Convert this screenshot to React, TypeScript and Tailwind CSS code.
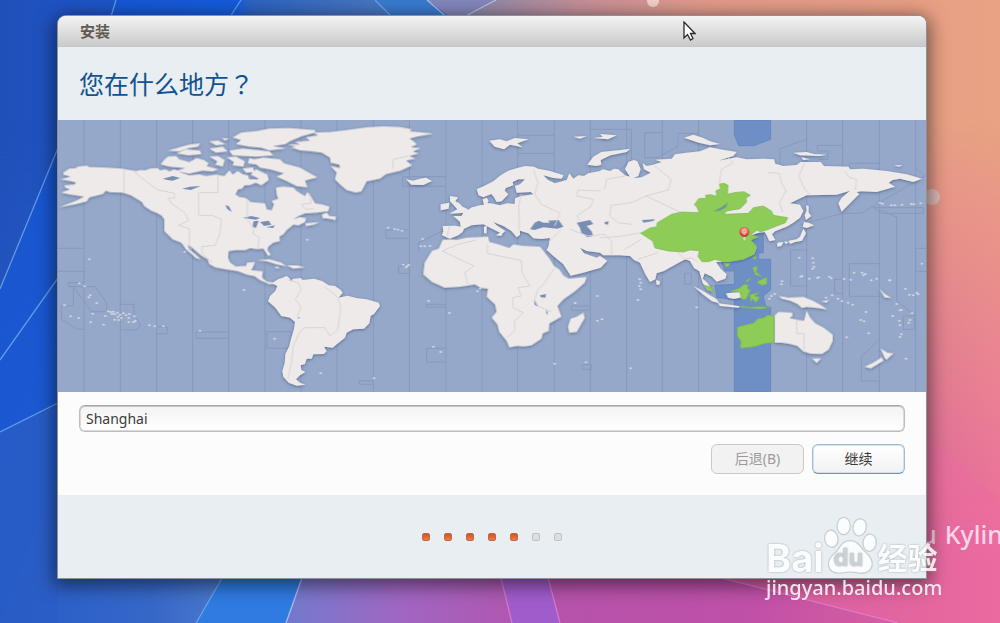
import { useState } from 'react';
import clsx from 'clsx';

const STEPS = 7;
const CURRENT_STEP = 5;

const zoneLines = [78, 187, 296, 404, 512, 621, 729, 837, 946, 1054, 1164, 1272, 1379, 1489, 1597, 1706, 1813, 1922, 2246, 2354, 2464, 2573];

// x, y pairs for the islands too small to outline
const islands = [
  [64, 502], [80, 511], [92, 544], [97, 538], [116, 561], [20, 568], [38, 601], [62, 606], [104, 593], [98, 619], [137, 626],
  [142, 600], [150, 586], [158, 588], [166, 587], [162, 594], [170, 595], [178, 590], [186, 596], [180, 602], [190, 606], [196, 592],
  [204, 598], [212, 606], [214, 594], [170, 611], [182, 612], [212, 618], [230, 601], [232, 615], [226, 618], [274, 628], [290, 631],
  [316, 631], [426, 644], [94, 430], [558, 522], [380, 407], [748, 371], [990, 335], [1010, 340], [1020, 341], [1032, 344],
  [1094, 369], [1088, 391], [1100, 391], [1116, 390], [1036, 446], [1048, 450], [1044, 454], [1052, 447], [1112, 555], [1174, 591],
  [1126, 692], [1148, 708], [1258, 526], [1266, 518], [1552, 561], [1618, 540], [1618, 614], [1632, 610], [1490, 743], [1584, 739],
  [1745, 490], [1748, 500], [1744, 510], [1748, 520], [1740, 552], [1916, 574], [1718, 757], [788, 772], [650, 668], [948, 787],
  [2224, 425], [2264, 427], [2266, 440], [2268, 452], [2264, 458], [2172, 496], [2170, 505], [2228, 482], [2232, 480], [2254, 488],
  [2278, 486], [2282, 484], [2314, 482], [2320, 487], [2358, 489], [2378, 491], [2388, 470], [2412, 470], [2422, 474], [2416, 478],
  [2440, 493], [2456, 488], [2494, 493], [2496, 493], [2542, 518], [2554, 536], [2566, 538], [2580, 535], [2576, 530], [2592, 443],
  [2516, 564], [2526, 583], [2504, 600], [2530, 582], [2556, 612], [2562, 592], [2524, 614], [2526, 628], [2552, 620], [2530, 655],
  [2526, 663], [2424, 588], [2408, 612], [2418, 616], [2366, 664], [2432, 652], [2544, 728], [2140, 540], [2134, 548], [2150, 534],
  [2340, 548], [2352, 556], [2370, 560], [2384, 566], [2322, 538], [2304, 545], [2500, 268], [2510, 268], [2532, 266], [2560, 264],
  [2568, 265], [2588, 262], [2466, 261], [2474, 263],
];

const WorldMap = () => (
  <svg viewBox="0 12 2604 816" className="block w-full bg-[#95a8c9]" role="img" aria-label="时区地图">
    <defs>
      <filter id="coast" x="-2%" y="-2%" width="104%" height="104%">
        <feDropShadow dx="0" dy="3" stdDeviation="5" floodColor="#33456b" floodOpacity="0.6" />
      </filter>
      <radialGradient id="pin" cx="0.5" cy="0.4" r="0.6">
        <stop offset="0.45" stopColor="#ff9a94" />
        <stop offset="0.7" stopColor="#e33a34" />
        <stop offset="1" stopColor="#c01818" />
      </radialGradient>
    </defs>

    {/* time zone boundaries */}
    <g fill="none" stroke="#879abd" strokeWidth="3">
      {zoneLines.map((x) => (
        <path key={x} d={`M${x},12 V828`} />
      ))}
      <path d="M0,397H78M0,466H78V500H32V512H112L146,562V587H100L46,512V570H10V610L60,640H78M187,565H228V592L248,630 234,642H187M296,633H328V653H296M512,648H414V667H512M627,647H700V697H627Z" />
      <path d="M1164,182H1034V211H1164M1054,342H984V367H1054M1022,450H1054V472H1022ZM1164,565H1104V573H1164M1164,697H1106V738H1164M904,794H946V805H904ZM1164,340L1082,380V410" />
      <path d="M1379,58H1489M1379,112H1489M1597,40H1720V130L1690,160M1760,125V50H1813M1760,125H1800L1860,90V52H1922M1540,570H1597V583H1540ZM1573,746H1600V760H1573Z" />
      <path d="M2246,70L2166,98V150M2354,88H2278V105H2310V130H2280M2464,142H2374V160M2573,155L2600,180 2410,292H2354L2230,325M2464,282L2516,303V555L2573,600M2464,443H2374V541H2464V670L2410,722V795H2464V828M2246,402H2198V510H2246M2354,490H2330V532H2354M2604,397H2573V466H2604M2536,600H2570V640H2536ZM2446,275H2596V292H2470Z" />
      <path d="M1880,472H1900V505H1880ZM1960,510H2010V540H1980V515" />
    </g>

    {/* selected zone */}
    <g transform="translate(1626 0)" fill="#6d8fc6" stroke="#6180b5" strokeWidth="2">
      <path d="M403,12H512V70L462,89 416,89 403,56Z" />
      <path d="M403,828V550L350,545 345,508 403,505V465L375,465 365,440 430,425 440,360 455,345 490,350V410L476,412V430H512V522L490,540 497,570 512,574V828Z" />
    </g>

    <g fill="#eeeaea" filter="url(#coast)">
      {/* North America and the Arctic */}
      <g transform="translate(-6 0)">
        <path d="M22,170L40,158 58,157 66,152 92,149 100,153 150,155 196,158 240,165 252,162 268,163 282,158 305,156 312,163 328,160 340,166 355,160 375,170 400,178 430,175 450,180 480,176 505,180 520,163 530,176 545,165 560,175 575,178 580,190 604,190 600,200 582,207 565,208 558,218 546,220 538,235 550,243 565,245 575,250 584,258 602,260 627,262 632,280 647,283 654,265 647,255 667,248 662,235 660,215 682,212 712,215 722,225 747,240 754,228 767,245 777,262 797,265 820,272 817,285 782,290 747,292 727,300 712,310 732,303 750,306 747,318 727,328 712,326 692,342 682,355 670,362 672,375 652,380 637,392 634,402 644,415 637,420 627,405 622,398 602,399 582,396 568,402 540,402 518,405 516,425 522,440 540,452 555,450 570,450 573,440 597,438 590,455 585,462 620,466 618,485 632,497 650,500 668,495 672,502 640,504 612,492 595,480 572,476 545,465 510,460 478,454 460,444 455,430 435,418 420,405 405,392 395,388 400,400 415,413 434,429 420,426 405,412 390,400 382,388 375,380 350,370 335,355 325,345 325,310 316,298 300,290 285,284 265,270 258,258 245,250 225,238 200,230 160,228 150,224 140,234 115,240 100,244 92,256 60,264 10,273 40,262 62,254 84,242 60,238 40,235 16,230 42,220 28,215 25,208 55,206 60,200 48,196 14,190 44,182 22,176Z" />
        <path d="M530,64L556,50 602,45 640,38 700,36 778,42 776,50 738,60 702,75 688,84 650,90 690,97 640,103 615,95 580,92 540,84 555,72ZM697,85L732,86 718,78 762,74 750,64 787,58 772,50 822,48 872,42 932,34 982,31 1032,33 1068,40 1060,46 1102,50 1132,53 1082,62 1060,68 1072,75 1082,85 1064,94 1094,96 1070,107 1088,112 1060,120 1078,128 1050,134 1068,148 1034,164 990,174 972,188 932,196 916,226 900,230 872,222 852,205 837,190 842,170 824,150 852,156 850,146 824,140 822,125 797,110 762,105 732,103 705,94 720,92Z" />
        <path d="M582,132L622,125 672,130 684,142 732,155 758,170 784,184 760,190 747,194 754,214 722,210 692,195 662,182 684,172 642,160 612,155 600,144Z" />
        <path d="M314,145L326,130 336,122 360,120 370,130 400,138 422,126 444,132 458,142 452,150 486,160 470,166 440,164 400,173 360,165 388,156 340,152Z" />
        <path d="M336,104L370,94 400,86 432,82 426,92 398,96 370,106ZM362,112L390,100 432,104 436,114 398,118ZM460,98L500,92 514,106 480,110ZM460,122L486,120 506,132 500,152 478,146 484,136ZM520,104L560,98 640,106 652,118 600,122 530,118ZM512,124L540,122 566,136 562,152 530,148 534,138ZM580,126L610,134 604,146 576,142ZM460,76L486,74 508,84 480,88ZM498,66L520,68 506,73ZM584,176L600,160 634,176 638,192 616,208 596,198 608,188ZM560,158L590,154 596,168 570,170Z" />
        <path d="M798,296L812,290 820,300 840,302 838,312 818,308 800,306ZM748,322L790,318 774,326 750,330ZM604,432L640,430 676,440 690,450 664,446 634,436ZM692,448L722,448 748,454 712,458ZM656,452L672,454 662,458Z" />
      </g>

      {/* South America */}
      <path transform="translate(576 0)" d="M66,502L84,490 96,486 110,480 122,490 152,486 158,492 192,488 216,495 236,508 255,510 272,522 278,530 266,545 292,539 322,547 350,550 386,560 390,570 372,594 362,600 358,622 342,638 310,640 290,650 285,665 264,682 248,695 222,692 230,706 222,714 190,715 185,728 170,728 165,744 152,748 154,762 166,768 150,778 138,790 150,800 166,806 140,809 116,800 100,782 97,765 104,742 106,715 118,690 124,665 132,640 135,618 120,605 94,600 76,575 54,556 60,540 76,525 82,510Z" />

      {/* Eurasia */}
      <g transform="translate(1026 0)">
        <path d="M126,358L130,346 128,330 165,329 182,332 180,318 160,300 185,300 190,290 216,274 240,268 252,266 248,250 260,245 266,254 262,262 272,262 300,268 322,262 344,264 345,247 365,240 400,235 392,228 350,230 345,210 360,205 375,190 355,190 338,198 340,208 318,216 314,224 325,235 305,256 290,258 282,244 274,234 250,244 236,238 230,220 252,210 280,196 302,178 325,164 352,156 375,150 402,152 414,158 450,165 491,178 485,188 460,186 430,178 444,192 465,202 500,192 508,172 520,188 535,178 552,180 565,172 600,165 608,160 630,165 642,158 655,160 675,178 690,182 675,160 685,138 702,132 712,136 722,160 715,180 700,187 725,184 752,170 732,160 728,142 740,150 760,146 785,138 765,131 815,128 825,115 860,110 900,106 930,94 960,100 1010,108 1000,120 955,134 1010,124 1040,130 1090,128 1122,130 1126,143 1150,150 1190,147 1202,138 1262,138 1272,150 1346,152 1350,160 1390,158 1460,165 1520,175 1566,188 1540,198 1500,188 1478,192 1466,200 1485,212 1430,228 1385,226 1370,228 1378,234 1354,258 1325,287 1315,262 1325,245 1350,224 1310,236 1220,238 1170,262 1200,266 1210,285 1200,305 1180,320 1160,332 1125,346 1116,355 1126,372 1108,376 1100,358 1094,348 1070,352 1050,360 1075,362 1052,372 1070,395 1062,415 1030,430 980,438 948,438 962,458 980,475 976,488 950,497 936,482 914,472 908,488 922,500 940,527 922,522 908,500 898,466 882,456 870,435 856,430 836,440 792,465 770,472 766,490 750,498 736,475 720,440 702,432 690,420 658,418 610,418 600,410 560,405 540,395 552,412 590,425 600,420 622,434 602,455 550,470 512,479 490,445 460,420 440,402 446,390 450,366 424,369 400,367 385,352 360,344 360,356 350,364 335,346 310,330 280,318 290,328 316,345 308,352 304,360 288,358 300,350 270,335 250,325 215,328 192,338 188,348 175,358 150,368 136,362Z" />
        <path d="M150,240L174,244 166,256 178,262 188,272 204,280 196,290 148,293 172,280 160,266 150,256ZM122,265L148,260 146,278 122,283ZM18,190L40,194 60,188 78,185 96,195 70,207 34,206ZM268,74L300,70 320,76 345,66 386,70 352,82 368,94 330,86 312,100 284,92ZM562,146L580,122 604,108 662,102 690,98 680,108 632,118 602,132 604,146 590,150ZM252,332L260,330 260,352 252,352ZM520,62L560,60 540,68ZM580,66L608,62 600,54 650,58 624,70Z" />
        <path d="M852,65L880,56 910,66 930,76 960,84 930,88 896,80ZM1180,110L1220,108 1242,114 1280,116 1260,120 1200,118ZM1204,124L1230,130 1210,132ZM1482,148L1508,148 1496,152Z" />
        {/* Japan and Sakhalin */}
        <path d="M1218,268L1226,270 1226,290 1234,300 1218,312 1214,298 1220,284ZM1212,318L1226,320 1242,328 1220,336 1208,332ZM1210,338L1218,352 1206,374 1186,378 1170,384 1166,374 1190,370 1200,362ZM1132,380L1150,378 1144,390 1132,392ZM1152,376L1166,378 1158,384Z" />
        <path d="M768,492L780,496 778,506 770,506Z" />
      </g>

      {/* Africa */}
      <path transform="translate(1026 0)" d="M128,372L150,370 170,372 200,365 264,362 268,378 296,385 328,396 340,385 372,390 420,392 428,402 450,430 462,450 478,460 490,478 506,488 560,483 554,500 526,525 490,550 472,570 484,602 448,622 446,645 428,652 424,668 394,688 372,691 350,690 328,694 320,675 298,648 292,625 275,605 290,587 285,565 260,542 264,518 242,516 225,505 205,508 182,512 134,515 96,498 70,475 74,440 96,405 116,398 122,385ZM512,608L530,602 550,590 554,606 530,648 508,650 504,632Z" />

      {/* South-east Asia and Oceania */}
      <g transform="translate(1626 0)">
        <path d="M280,510L308,524 350,550 358,562 336,556 310,536ZM354,562L400,568 420,571 415,575 360,570ZM378,532L420,528 426,544 402,549 384,545Z" />
      </g>
      <g transform="translate(2046 0)">
        <path d="M104,598L116,588 156,590 158,600 148,606 172,612 192,614 200,584 210,604 226,622 252,636 278,656 278,675 266,700 246,714 212,713 190,706 172,690 150,684 126,680 104,680ZM216,727L243,727 230,741ZM422,697L442,710 460,712 440,731 434,726ZM374,752L400,740 425,724 430,734 392,757ZM116,540L145,545 190,543 220,555 240,566 262,580 232,576 200,573 186,576 172,564 150,554 126,548ZM244,556L268,552 272,546 260,560ZM418,518L432,532 454,546 434,544Z" />
      </g>
    </g>
    <g fill="#dfe0e6" opacity="0.85">
      {islands.map(([x, y], i) => (
        <ellipse key={i} cx={x} cy={y} rx="4" ry="3" />
      ))}
    </g>

    {/* lakes and inland seas */}
    <g fill="#788eb5">
      <path d="M1416,340L1430,320 1442,314 1456,320 1476,320 1470,314 1502,312 1516,332 1498,338 1456,334 1430,342ZM1556,320L1596,312 1606,324 1586,330 1600,345 1606,360 1588,364 1570,350 1566,336ZM1640,318L1652,316 1650,326 1640,324ZM1446,538L1464,534 1462,545 1448,544ZM1428,552L1440,572 1430,566ZM1466,578L1470,598 1464,590Z" />
      <path d="M314,188L344,180 366,186 344,194 328,192ZM372,218L396,212 428,210 398,222ZM502,268L512,270 522,288 508,280ZM554,306L580,300 606,306 594,311ZM586,316L602,314 594,336 584,332ZM606,318L632,314 640,326 618,330ZM624,334L650,328 646,336ZM720,602L726,606 720,608ZM696,486L704,492 698,496Z" />
      <path d="M1752,312L1790,310 1786,315 1756,320Z" />
    </g>

    {/* zone borders over land */}
    <g fill="none" stroke="#d8d3d4" strokeWidth="3">
      <path d="M198,160V230M230,168L262,195 300,222 350,232V246H330L340,262 380,290 392,314 362,328 394,338V385L400,400M480,178V230H422V298H462L490,310 486,350 472,388 432,392V412L464,440M568,250V310L588,340 584,352 604,365 600,396M754,232L760,262 730,265 742,280 766,278" />
      <path d="M690,492L720,500 730,520 712,550 730,575 718,600M724,650L740,635 800,635 815,660 840,640 848,575 840,545 800,512M724,650L706,690 700,740 690,790M1004,158L1006,130 1050,120" />
      <path d="M1152,405L1200,385 1254,372M1152,405L1248,450 1220,470 1230,505M1288,385V412L1390,434 1392,470 1416,510 1380,515 1390,540 1364,545V575L1396,590 1370,615V645L1346,665M1490,455L1460,500 1440,520 1430,550 1440,570 1480,588M1174,330L1166,366M1390,235L1382,270 1384,345M1426,160L1440,200 1430,235 1450,265 1506,292 1490,330M1510,340L1470,380M1536,340L1590,360 1640,355 1660,375 1660,418" />
      <path d="M1626,225L1560,222 1556,240 1606,250 1600,270 1556,300 1566,314M1640,220L1646,190 1700,180M1790,150L1840,190 1830,222 1764,240 1870,290M1764,240L1720,260 1660,268 1655,300 1680,320 1720,325M1626,365L1680,362 1750,350M1700,400L1750,370M1984,200L1990,160 2026,140 2010,125M1740,430L1800,410" />
      <path d="M2130,170L2164,172 2170,200 2184,225 2164,260 2174,290M2240,140L2222,180 2240,220 2256,235M2360,165L2374,185 2396,190 2392,222M2216,610V652H2238V706M1858,408L1880,430 1900,425 1920,438M2144,330L2120,345" />
    </g>

    {/* areas that share the selected zone */}
    <g transform="translate(1626 0)" fill="#8ccc57" stroke="#7cb64e" strokeWidth="2">
      <path d="M298,290L290,272 283,266 296,248 320,246 316,238 332,236 350,241 348,224 362,218 358,204 372,202 384,208 382,235 402,230 432,227 451,238 438,246 440,258 420,278 380,285 372,295 445,292 460,275 490,270 514,285 520,298 563,305 556,320 530,330 505,340 480,348 472,342 452,356 474,362 452,372 470,390 462,415 430,430 396,436 372,438 345,430 326,437 306,437 294,422 298,404 270,402 250,408 205,405 165,396 158,375 122,352 150,336 170,332 172,320 215,295 245,288Z" />
      <path d="M412,634L440,626 460,622 474,608 490,606 504,597 522,600V680L496,682 462,692 425,697 420,690 424,678 412,660ZM312,507L334,514 342,528 324,522ZM392,526L420,516 430,506 444,506 442,518 451,522 438,550 424,549 420,528ZM450,536L478,530 462,540 478,544 468,560 458,548 452,558ZM372,442L390,442 384,453 376,450ZM458,426L468,420 466,432ZM458,454L472,452 468,468 486,482 466,476ZM474,496L500,484 500,504 486,508 472,500ZM438,494L452,486 442,498ZM420,570L450,574 478,572 508,574 480,579 424,574Z" />
      <path d="M342,285L364,274 383,260 378,274 360,284Z" fill="#6d8fae" />
    </g>

    {/* location pin */}
    <path d="M2059,360V371" stroke="#eee" strokeWidth="4" strokeLinecap="round" />
    <ellipse cx="2059" cy="348" rx="14" ry="15" fill="url(#pin)" />
    <path d="M2054,342H2064M2054,349H2064M2056,356H2062" stroke="#ffc4c0" strokeWidth="2" />
  </svg>
);

const Wallpaper = () => (
  <svg
    viewBox="0 0 1000 623"
    preserveAspectRatio="none"
    className="absolute inset-0 h-full w-full"
    aria-hidden="true"
  >
    <defs>
      <linearGradient id="top">
        <stop offset="0" stopColor="#214fb8" />
        <stop offset="0.12" stopColor="#1c56cc" />
        <stop offset="0.24" stopColor="#1b5edb" />
        <stop offset="0.25" stopColor="#2c64c0" />
        <stop offset="0.38" stopColor="#4876bf" />
        <stop offset="0.48" stopColor="#9088a8" />
        <stop offset="0.58" stopColor="#c48f98" />
        <stop offset="0.7" stopColor="#e29a8b" />
        <stop offset="1" stopColor="#e9a283" />
      </linearGradient>
      <linearGradient id="bottom">
        <stop offset="0" stopColor="#275bc8" />
        <stop offset="0.15" stopColor="#3667c8" />
        <stop offset="0.22" stopColor="#4878cc" />
        <stop offset="0.3" stopColor="#7878cc" />
        <stop offset="0.4" stopColor="#a066c2" />
        <stop offset="0.55" stopColor="#b553ab" />
        <stop offset="0.75" stopColor="#c050a8" />
        <stop offset="0.95" stopColor="#e0649c" />
        <stop offset="1" stopColor="#ec6b9f" />
      </linearGradient>
      <linearGradient id="fade" x2="0" y2="1">
        <stop offset="0.2" stopColor="#fff" stopOpacity="0" />
        <stop offset="0.9" stopColor="#fff" />
      </linearGradient>
      <mask id="lower">
        <rect width="1000" height="623" fill="url(#fade)" />
      </mask>
    </defs>
    <rect width="1000" height="623" fill="url(#top)" />
    <rect width="1000" height="623" fill="url(#bottom)" mask="url(#lower)" />
    <path d="M116,0H241L0,623V290Z" fill="#1259dc" opacity="0.55" />
    <path d="M0,432L58,403V623H0Z" fill="#2b5cc4" opacity="0.8" />
    <path d="M375,0H427L455,20H390Z" fill="#3a7bd0" />
    <path d="M427,0H496L455,20Z" fill="#8487bb" />
    <path d="M224,575H303L286,623H196Z" fill="#2f7be2" />
    <path d="M499,570H546L560,623H512Z" fill="#a05ccb" />
    <path d="M690,570L900,623H1000V500L930,440Z" fill="#ec6c9f" opacity="0.5" />
    <g fill="none" stroke="#7db8f4" strokeWidth="1.3" opacity="0.7">
      <path d="M116,0L110,20M241,0L228,20M58,148L0,289M58,278L0,360M0,432L58,403M224,575L196,623M375,0L395,20" />
      <path d="M303,575L286,623M427,0L450,20M496,0L458,20" stroke="#cfdaf5" />
      <path d="M499,570L512,623M546,570L560,623M690,570L898,623" stroke="#e486d4" />
    </g>
    <circle cx="653" cy="1" r="6" fill="#f2d0cc" />
    <circle cx="932" cy="197" r="8" fill="#dfb9b6" />
  </svg>
);

const Paw = () => (
  <svg viewBox="0 0 162 174" className="h-[58px] w-[54px]" aria-hidden="true">
    <g fill="#fff" stroke="#c3cccd" strokeWidth="4">
      <ellipse cx="59" cy="30" rx="20" ry="26" />
      <ellipse cx="107" cy="34" rx="20" ry="26" transform="rotate(12 107 34)" />
      <ellipse cx="22" cy="68" rx="20" ry="26" transform="rotate(-8 22 68)" />
      <ellipse cx="137" cy="80" rx="20" ry="26" transform="rotate(6 137 80)" />
      <path d="M78,74C104,74 108,94 124,108 140,122 148,134 144,150 138,172 118,174 98,170 84,168 72,168 60,170 38,174 18,170 14,150 10,130 24,118 38,106 50,92 54,74 78,74Z" />
    </g>
  </svg>
);

const Watermark = () => (
  <div className="pointer-events-none absolute top-[514px] left-[766px] font-['Noto_Sans','Noto_Sans_CJK_SC',sans-serif] whitespace-nowrap text-white opacity-85">
    <div className="flex h-[60px] items-end [text-shadow:0_0_2px_#84908f]">
      <span className="font-[Inter,sans-serif] text-[38px] leading-8 font-bold">Bai</span>
      <div className="relative">
        <Paw />
        <span className="absolute inset-x-0 bottom-0 pr-1 text-center font-[Inter,sans-serif] text-[24px] leading-8 font-bold text-[#c5ced2]">
          du
        </span>
      </div>
      <span className="text-[30px] leading-8 font-bold">经验</span>
    </div>
    <div className="pt-[2px] text-[20px] leading-6 font-medium">jingyan.baidu.com</div>
  </div>
);

export default function App() {
  const [city, setCity] = useState('Shanghai');

  return (
    <div className="relative min-h-screen overflow-hidden font-['Noto_Sans','Noto_Sans_CJK_SC',sans-serif]">
      <Wallpaper />
      <div className="absolute top-[514px] left-[929px] flex gap-2 text-[25px] leading-10 font-medium whitespace-nowrap text-[#fbd5ea]">
        <span className="-ml-2">u</span>
        <span>Kylin</span>
      </div>

      <div className="relative pt-4 pr-[74px] pb-11 pl-[58px]">
        <main className="overflow-hidden rounded-t-lg bg-[#e8eef2] shadow-[0_0_0_1px_#8f9293,0_4px_18px_4px_rgba(0,0,0,0.5)]">
          <div className="flex h-[31px] items-center border-b border-[#c4c7c9] bg-linear-to-b from-[#f4f4f4] to-[#cacaca] px-[22px] text-[15px] leading-5 font-bold text-[#61584f]">
            安装
          </div>
          <header className="flex h-[73px] items-center px-[21px]">
            <h1 className="text-[25px] leading-8 text-[#125290]">
              您在什么地方<span className="font-['Noto_Sans_CJK_TC',sans-serif]" lang="zh-TW">？</span>
            </h1>
          </header>

          <WorldMap />

          <form
            className="flex flex-col gap-3 bg-[#fcfcfc] px-[21px] pt-[13px] pb-[21px]"
            onSubmit={(e) => e.preventDefault()}
          >
            <input
              type="text"
              aria-label="地点"
              value={city}
              onChange={(e) => setCity(e.target.value)}
              className="h-[27px] w-full rounded-md border border-[#bdbdbd] border-t-[#a9a9a9] bg-linear-to-b from-[#f3f3f3] to-white px-[6px] text-[14px] leading-5 text-[#3c3c3c] shadow-[inset_0_1px_0_#c4c4c4,inset_0_0_0_1px_#dadada] outline-none"
            />
            <div className="flex justify-end gap-2 text-[14px] leading-5">
              <button
                type="button"
                disabled
                className="h-[30px] w-[93px] rounded-md border border-[#c9c9c9] bg-[#f2f2f2] text-[#9b9b9b]"
              >
                后退(B)
              </button>
              <button
                type="submit"
                className="h-[30px] w-[93px] rounded-md border border-[#9dbdd4] border-b-[#5f97bd] bg-linear-to-b from-white to-[#f1f1f1] text-[#3c3c3c] shadow-[inset_0_0_0_1px_#d3e2ec]"
              >
                继续
              </button>
            </div>
          </form>

          <footer className="flex h-[83px] items-center justify-center gap-[14px]">
            {Array.from({ length: STEPS }, (_, i) => (
              <span
                key={i}
                className={clsx(
                  'size-2 rounded-xs border',
                  i < CURRENT_STEP
                    ? 'border-[#c4673f] bg-linear-to-b from-[#d2521f] to-[#ee7a4a]'
                    : 'border-[#bfc1c2] bg-[#dcdedf]'
                )}
              />
            ))}
          </footer>
        </main>
      </div>

      <Watermark />

      {/* mouse pointer */}
      <svg viewBox="0 0 13 20" className="absolute top-[21px] left-[683px] h-5 w-[13px]" aria-hidden="true">
        <path d="M1,1V17L4.5,13.5 7.5,19 10,17.5 7.5,12.5H12Z" fill="#fff" stroke="#2b2b2b" strokeWidth="1.3" />
      </svg>
    </div>
  );
}
